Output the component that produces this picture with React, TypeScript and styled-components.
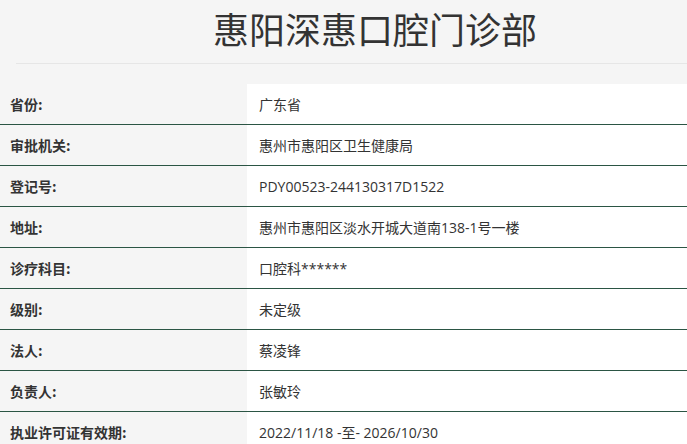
import React from "react";
import styled, { createGlobalStyle } from "styled-components";

const Global = createGlobalStyle`
  html, body { margin: 0; padding: 0; background: #f5f5f5; }
  body { font-family: "Noto Sans CJK SC", "Noto Sans", sans-serif; color: #333; }
`;

const Page = styled.div`
  width: 687px;
  height: 444px;
  overflow: hidden;
  background: #f5f5f5;
`;

const Header = styled.div`
  margin-left: 16px;
  height: 64px;
  border-bottom: 1px solid #e6e6e6;
  display: flex;
  align-items: center;
  justify-content: center;
  padding-left: 47px;
  box-sizing: border-box;
`;

const Title = styled.h1`
  margin: 0;
  font-size: 36px;
  font-weight: 400;
  color: #333;
  line-height: 1;
  transform: translateY(-4px);
`;

const Table = styled.div`
  margin-top: 20px;
  display: flex;
  flex-direction: column;
`;

const Row = styled.div`
  display: grid;
  grid-template-columns: 247px 1fr;
  height: 41px;
  border-bottom: 1px solid #2b5544;
  box-sizing: border-box;
`;

const Label = styled.div`
  display: flex;
  align-items: center;
  padding-left: 10px;
  font-size: 14px;
  font-weight: 700;
  color: #333;
  background: #f5f5f5;
`;

const Value = styled.div`
  display: flex;
  align-items: center;
  padding-left: 12px;
  font-family: "Open Sans", "Noto Sans CJK SC", sans-serif;
  font-size: 14px;
  color: #333;
  background: #fff;
`;

const rows: [string, string][] = [
  ["省份:", "广东省"],
  ["审批机关:", "惠州市惠阳区卫生健康局"],
  ["登记号:", "PDY00523-244130317D1522"],
  ["地址:", "惠州市惠阳区淡水开城大道南138-1号一楼"],
  ["诊疗科目:", "口腔科******"],
  ["级别:", "未定级"],
  ["法人:", "蔡凌锋"],
  ["负责人:", "张敏玲"],
  ["执业许可证有效期:", "2022/11/18 -至- 2026/10/30"],
];

export default function App() {
  return (
    <Page>
      <Global />
      <Header>
        <Title>惠阳深惠口腔门诊部</Title>
      </Header>
      <Table>
        {rows.map(([l, v]) => (
          <Row key={l}>
            <Label>{l}</Label>
            <Value>{v}</Value>
          </Row>
        ))}
      </Table>
    </Page>
  );
}
